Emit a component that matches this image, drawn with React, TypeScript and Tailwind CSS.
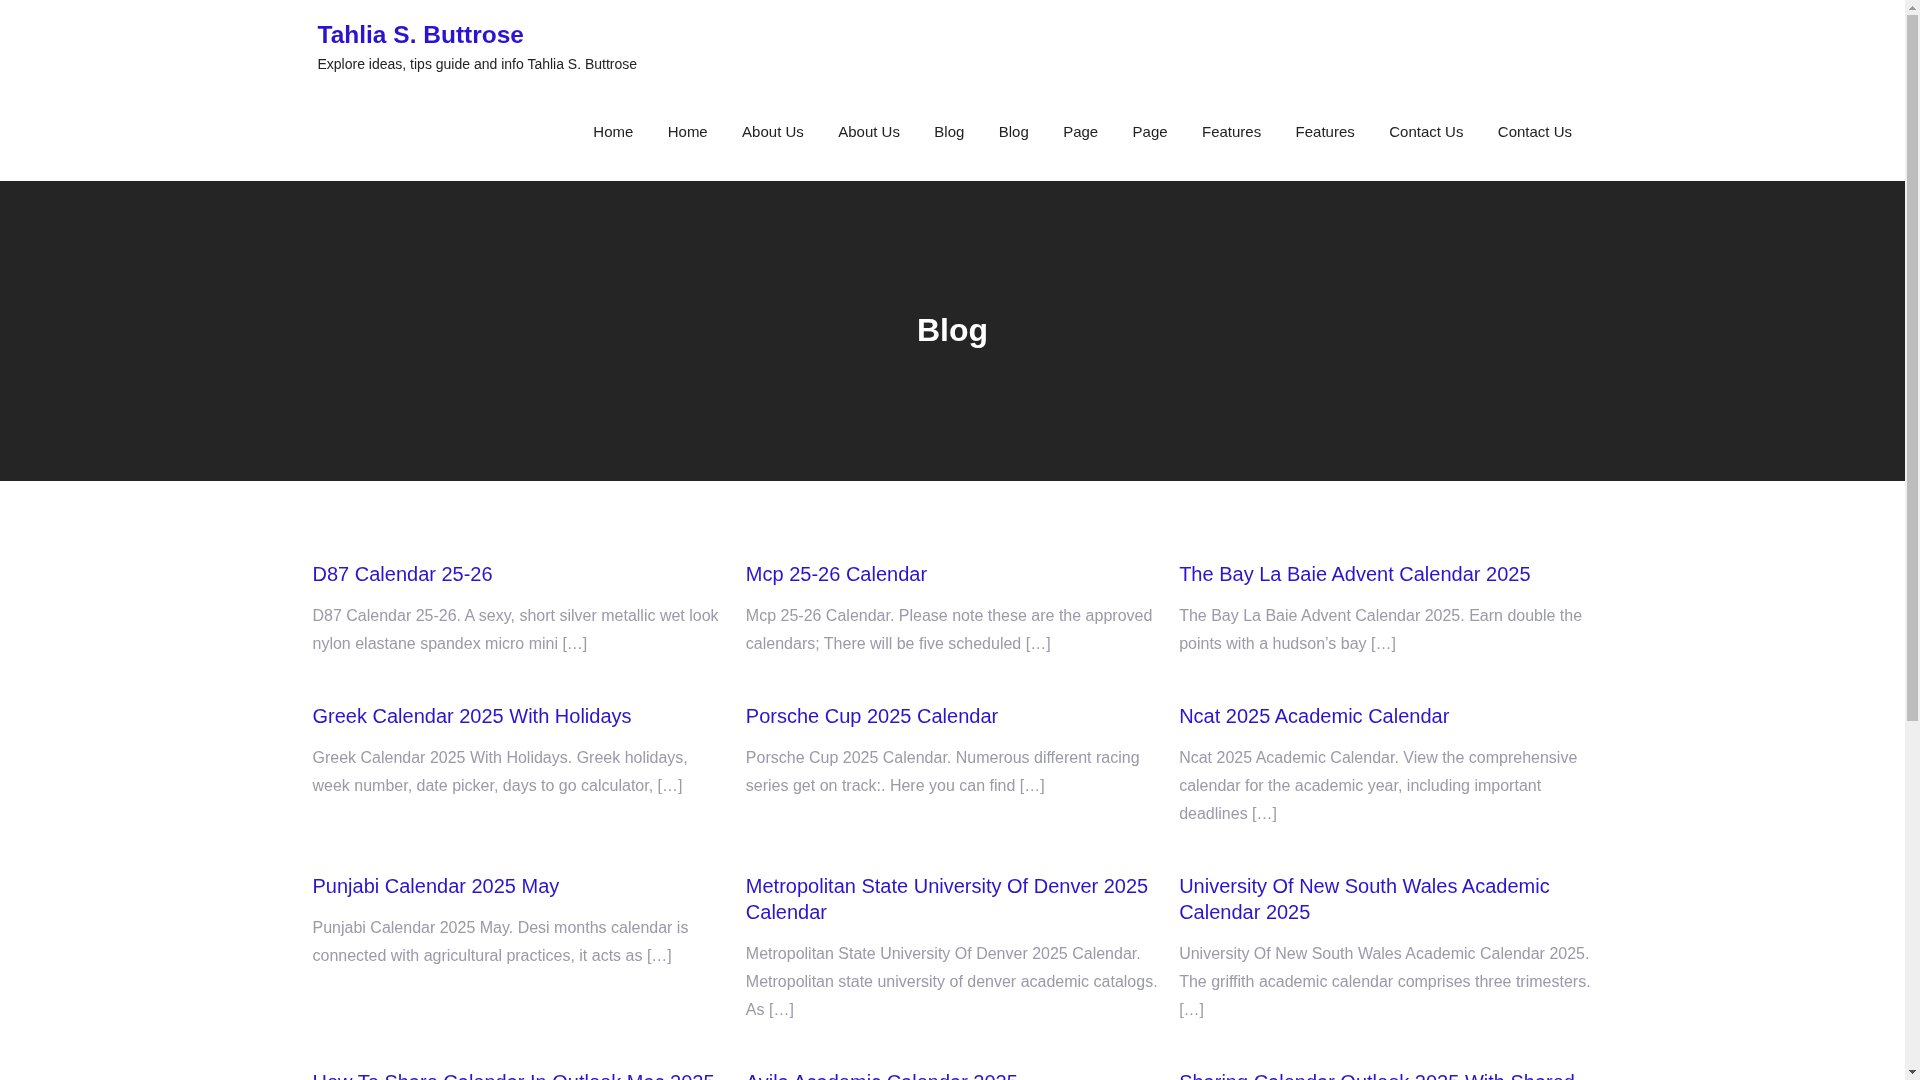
const navItems = ['Home', 'Home', 'About Us', 'About Us', 'Blog', 'Blog', 'Page', 'Page', 'Features', 'Features', 'Contact Us', 'Contact Us'];

const posts = [
  { title: 'D87 Calendar 25-26', excerpt: 'D87 Calendar 25-26. A sexy, short silver metallic wet look nylon elastane spandex micro mini […]' },
  { title: 'Mcp 25-26 Calendar', excerpt: 'Mcp 25-26 Calendar. Please note these are the approved calendars; There will be five scheduled […]' },
  { title: 'The Bay La Baie Advent Calendar 2025', excerpt: 'The Bay La Baie Advent Calendar 2025. Earn double the points with a hudson’s bay […]' },
  { title: 'Greek Calendar 2025 With Holidays', excerpt: 'Greek Calendar 2025 With Holidays. Greek holidays, week number, date picker, days to go calculator, […]' },
  { title: 'Porsche Cup 2025 Calendar', excerpt: 'Porsche Cup 2025 Calendar. Numerous different racing series get on track:. Here you can find […]' },
  { title: 'Ncat 2025 Academic Calendar', excerpt: 'Ncat 2025 Academic Calendar. View the comprehensive calendar for the academic year, including important deadlines […]' },
  { title: 'Punjabi Calendar 2025 May', excerpt: 'Punjabi Calendar 2025 May. Desi months calendar is connected with agricultural practices, it acts as […]' },
  { title: 'Metropolitan State University Of Denver 2025 Calendar', excerpt: 'Metropolitan State University Of Denver 2025 Calendar. Metropolitan state university of denver academic catalogs. As […]' },
  { title: 'University Of New South Wales Academic Calendar 2025', excerpt: 'University Of New South Wales Academic Calendar 2025. The griffith academic calendar comprises three trimesters. […]' },
  { title: 'How To Share Calendar In Outlook Mac 2025', excerpt: 'How To Share Calendar In Outlook Mac 2025.' },
  { title: 'Avila Academic Calendar 2025', excerpt: 'Avila Academic Calendar 2025.' },
  { title: 'Sharing Calendar Outlook 2025 With Shared Mailbox', excerpt: 'Sharing Calendar Outlook 2025 With Shared Mailbox.' },
];

function ScrollArrow({ down, fill }: { down?: boolean; fill: string }) {
  return (
    <svg width="7" height="4" viewBox="0 0 7 4" shapeRendering="crispEdges" className={down ? 'rotate-180' : ''}>
      <path d="M3 0h1v1h1v1h1v1h1v1H0V3h1V2h1V1h1z" fill={fill} />
    </svg>
  );
}

export default function App() {
  return (
    <div className="flex h-screen overflow-hidden bg-white font-['Liberation_Sans',Arial,sans-serif]">
      <div className="flex-1 min-w-0 overflow-hidden [will-change:opacity]">
        <header className="h-[181px]">
          <div className="w-[1300px] mx-auto px-[15px] pt-[20px]">
            <a className="block text-[24.5px] leading-[29px] font-bold text-[#2a14d2]">Tahlia S. Buttrose</a>
            <p className="mt-[4px] text-[14px] leading-[22px] text-[#222222]">Explore ideas, tips guide and info Tahlia S. Buttrose</p>
            <nav className="mt-[43px] flex justify-end gap-[34.4px] pr-[15.5px]">
              {navItems.map((item, i) => (
                <a key={i} className="text-[15px] leading-[28px] text-[#222222]">{item}</a>
              ))}
            </nav>
          </div>
        </header>

        <section className="h-[300px] bg-[#252525] flex items-center justify-center pb-[3px]">
          <h1 className="text-[32px] leading-[38px] font-bold text-white">Blog</h1>
        </section>

        <main className="w-[1300px] mx-auto pt-[80px] grid grid-cols-3">
          {posts.map((post, i) => (
            <article key={i} className="px-[10px] pb-[45px]">
              <h2 className="text-[20px] leading-[26px] text-[#2a14d2]">{post.title}</h2>
              <p className="mt-[15px] text-[16px] leading-[28px] text-[#9a9aa8]">{post.excerpt}</p>
            </article>
          ))}
        </main>
      </div>

      <div className="w-[15px] shrink-0 bg-[#efefef] flex flex-col">
        <div className="h-[15px] pt-[6px] pl-[4px] flex items-start">
          <ScrollArrow fill="#9a9a9a" />
        </div>
        <div className="flex-1 min-h-0">
          <div className="h-[706px] w-[11px] ml-[2px] bg-[#bdbdbd]" />
        </div>
        <div className="h-[15px] pt-[5px] pl-[4px] flex items-start">
          <ScrollArrow down fill="#505050" />
        </div>
      </div>
    </div>
  );
}
